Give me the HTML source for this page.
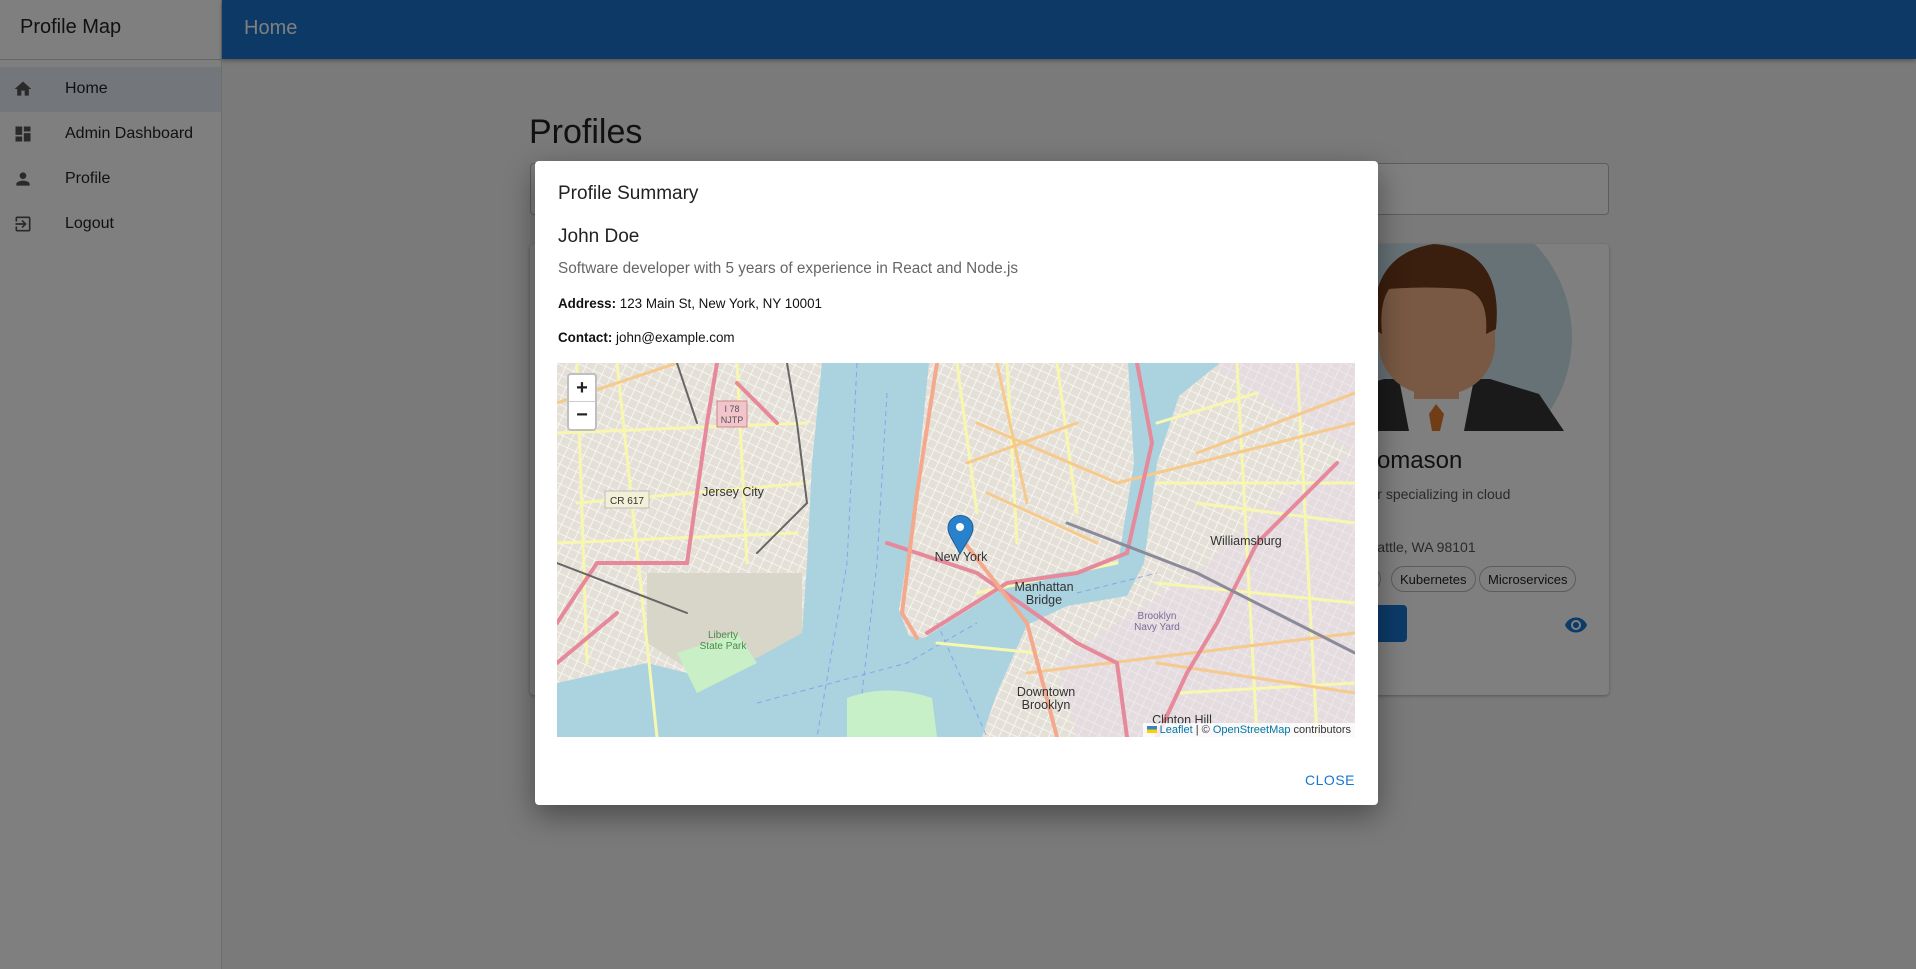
<!DOCTYPE html>
<html><head><meta charset="utf-8"><style>
*{box-sizing:border-box;margin:0;padding:0}
body{width:1916px;height:969px;overflow:hidden;background:#f5f5f5;font-family:"Liberation Sans",Arial,sans-serif;position:relative;color:#222}
.abs{position:absolute}
.side{left:0;top:0;width:222px;height:969px;background:#fff;border-right:1px solid #ddd}
.side .ttl{position:absolute;left:20px;top:16px;font-size:20px;color:#222}
.side .hr{position:absolute;left:0;top:59px;width:222px;border-top:1px solid #ccc}
.item{position:absolute;left:0;width:221px;height:45px;font-size:16px;color:#222}
.item span{position:absolute;left:65px;top:13px}
.item svg{position:absolute;left:13px;top:12px}
.hdr{left:222px;top:0;width:1694px;height:59px;background:#1872cc;box-shadow:0 2px 4px rgba(0,0,0,.3)}
.hdr span{position:absolute;left:22px;top:17px;color:#fff;font-size:20px}
.card{background:#fff;border-radius:4px;box-shadow:0 1px 3px rgba(0,0,0,.3)}
.chip{position:absolute;height:26px;border:1px solid #bbb;border-radius:13px;font-size:13px;padding:5px 8px;color:#222}
.overlay{left:0;top:0;width:1916px;height:969px;background:rgba(0,0,0,.5)}
.modal{left:535px;top:161px;width:843px;height:644px;background:#fff;border-radius:4px;box-shadow:0 10px 30px rgba(0,0,0,.4)}
.t{position:absolute;white-space:nowrap}
</style></head><body>
<div class="abs side">
 <div class="ttl">Profile Map</div><div class="hr"></div>
 <div class="item" style="top:67px;background:#e6eef6"><svg width="20" height="20" viewBox="0 0 24 24"><path d="M10 20v-6h4v6h5v-8h3L12 3 2 12h3v8z" fill="#555"/></svg><span>Home</span></div>
 <div class="item" style="top:112px"><svg width="20" height="20" viewBox="0 0 24 24"><path d="M3 13h8V3H3zm0 8h8v-6H3zm10 0h8V11h-8zm0-18v6h8V3z" fill="#555"/></svg><span>Admin Dashboard</span></div>
 <div class="item" style="top:157px"><svg width="20" height="20" viewBox="0 0 24 24"><path d="M12 12c2.2 0 4-1.8 4-4s-1.8-4-4-4-4 1.8-4 4 1.8 4 4 4zm0 2c-2.7 0-8 1.3-8 4v2h16v-2c0-2.7-5.3-4-8-4z" fill="#555"/></svg><span>Profile</span></div>
 <div class="item" style="top:202px"><svg width="20" height="20" viewBox="0 0 24 24"><path d="M10.1 15.6 11.5 17l5-5-5-5-1.4 1.4 2.6 2.6H3v2h9.7zM19 3H5c-1.1 0-2 .9-2 2v4h2V5h14v14H5v-4H3v4c0 1.1.9 2 2 2h14c1.1 0 2-.9 2-2V5c0-1.1-.9-2-2-2z" fill="#555"/></svg><span>Logout</span></div>
</div>
<div class="abs hdr"><span>Home</span></div>
<div class="t" style="left:529px;top:113px;font-size:34px;color:#222">Profiles</div>
<div class="abs" style="left:530px;top:163px;width:1079px;height:52px;border:1px solid #bbb;border-radius:4px;background:#fff"></div>
<div class="abs card" style="left:530px;top:244px;width:345px;height:451px"></div>
<div class="abs card" style="left:897px;top:244px;width:345px;height:451px"></div>
<div class="abs card" style="left:1264px;top:244px;width:345px;height:451px;overflow:hidden">
 <svg class="abs" style="left:0;top:0" width="345" height="187" viewBox="0 0 345 187">
  <circle cx="173" cy="93" r="135" fill="#cfe4ee"/>
  <path d="M40 187 L70 150 L120 135 L226 135 L275 150 L300 187Z" fill="#353535"/>
  <path d="M135 135 L210 135 L200 187 L145 187Z" fill="#fff"/>
  <path d="M165 170 L172 160 L180 170 L176 187 L168 187Z" fill="#e07b2c"/>
  <rect x="115" y="20" width="116" height="130" rx="50" fill="#f2b386"/>
  <rect x="150" y="120" width="45" height="35" fill="#f2b386"/>
  <path d="M110 85 Q105 10 170 0 Q240 5 232 85 L222 90 Q225 50 200 45 Q160 42 125 45 Q115 60 118 90Z" fill="#743d1c"/>
 </svg>
 <div class="t" style="left:16px;top:203px;font-size:24px">Ethan Thomason</div>
 <div class="t" style="left:16px;top:242px;font-size:14px;color:#555">Cloud developer specializing in cloud</div>
 <div class="t" style="left:16px;top:295px;font-size:14px;color:#555">456 Pine St, Seattle, WA 98101</div>
 <div class="chip" style="left:70px;top:322px">AWS</div>
 <div class="chip" style="left:127px;top:322px">Kubernetes</div>
 <div class="chip" style="left:215px;top:322px">Microservices</div>
 <div class="abs" style="left:16px;top:361px;width:127px;height:37px;background:#1976d2;border-radius:4px;color:#fff;font-size:14px;padding:11px 14px">VIEW PROFILE</div>
 <svg class="abs" style="left:300px;top:369px" width="24" height="24" viewBox="0 0 24 24"><path d="M12 4.5C7 4.5 2.7 7.6 1 12c1.7 4.4 6 7.5 11 7.5s9.3-3.1 11-7.5c-1.7-4.4-6-7.5-11-7.5zM12 17c-2.8 0-5-2.2-5-5s2.2-5 5-5 5 2.2 5 5-2.2 5-5 5zm0-8c-1.7 0-3 1.3-3 3s1.3 3 3 3 3-1.3 3-3-1.3-3-3-3z" fill="#1976d2"/></svg>
</div>
<div class="abs overlay"></div>
<div class="abs modal">
 <div class="t" style="left:23px;top:22px;font-size:19px;color:#222">Profile Summary</div>
 <div class="t" style="left:23px;top:65px;font-size:19px;color:#222">John Doe</div>
 <div class="t" style="left:23px;top:99px;font-size:15.3px;color:#666">Software developer with 5 years of experience in React and Node.js</div>
 <div class="t" style="left:23px;top:135px;font-size:13.4px;color:#111"><b>Address:</b> 123 Main St, New York, NY 10001</div>
 <div class="t" style="left:23px;top:169px;font-size:13.4px;color:#111"><b>Contact:</b> john@example.com</div>
 <div class="abs" style="left:22px;top:202px;width:798px;height:374px;overflow:hidden;background:#ece8e1">
  <svg width="798" height="374" viewBox="0 0 798 374" style="position:absolute;left:0;top:0">
   <defs>
    <pattern id="g" width="9" height="9" patternUnits="userSpaceOnUse" patternTransform="rotate(25)">
     <rect width="9" height="9" fill="#e4e0d8"/><path d="M0 0H9M0 0V9" stroke="#fbfaf7" stroke-width="1.6"/>
    </pattern>
   </defs>
   <rect width="798" height="374" fill="url(#g)"/>
   <path d="M650 0 L798 0 L798 374 L520 374 L500 300 L560 260 L640 210 L700 150 L760 110 L798 90 Z" fill="#e5d8e6" opacity=".45"/>
   <path d="M90 210 L245 210 L245 300 L130 305 L90 280Z" fill="#d8d5c9"/>
   <path d="M265 0 L372 0 L357 150 L342 247 L352 273 L367 275 L459 217 L561 200 L577 100 L571 0 L663 0 L622 33 L600 100 L587 200 L570 233 L510 243 L470 262 L440 330 L425 374 L0 374 L0 320 L90 300 L130 310 L200 295 L245 270 L250 200 L255 100Z" fill="#aad3df"/>
   <g stroke="#7a8ef0" stroke-width="1" stroke-dasharray="5 4" fill="none" opacity=".7">
    <path d="M300 0 L290 200 L260 374 M330 30 L320 200 L300 374 M200 340 L350 300 L420 260 M520 230 L600 210 M380 260 L430 374"/>
   </g>
   <path d="M290 335 Q330 320 375 335 L380 374 L290 374Z" fill="#c8f0c8"/>
   <path d="M120 290 L180 270 L200 300 L140 330Z" fill="#c8efc6"/>
   <g fill="none" stroke-linecap="round">
    <g stroke="#f7f7b0" stroke-width="3">
     <path d="M20 140 L250 120 M0 70 L250 60 M60 0 L100 374 M600 60 L700 30 M640 140 L798 160 M620 330 L798 320 M0 180 L240 170 M20 0 L30 300 M180 0 L190 200 M400 0 L420 150 M450 0 L460 180 M500 0 L520 150 M420 230 L560 200 M680 0 L700 374 M740 0 L760 374 M600 120 L798 120 M600 220 L798 240 M380 280 L480 290"/>
    </g>
    <g stroke="#f6c98c" stroke-width="3">
     <path d="M470 310 L798 270 M420 60 L560 120 L798 60 M410 100 L520 60 M430 130 L540 180 M0 40 L120 0 M640 90 L798 30 M600 300 L798 330 M440 0 L470 140"/>
    </g>
    <g stroke="#e6899b" stroke-width="4">
     <path d="M0 260 L40 200 L130 200 L150 60 L160 0 M330 180 L420 210 L520 280 L560 300 L570 374 M580 0 L595 80 L570 190 L520 210 L450 220 L370 270 M780 100 L700 180 L660 260 L630 310 L600 374 M180 20 L220 60 M0 300 L60 250"/>
    </g>
    <g stroke="#f4a98d" stroke-width="4">
     <path d="M380 0 L360 130 L345 250 L360 275 M400 170 L470 260 L500 374"/>
    </g>
    <path d="M510 160 L640 210 L798 290" stroke="#8a8a9a" stroke-width="3"/>
    <path d="M230 0 L240 60 L250 140 L200 190 M0 200 L130 250 M120 0 L140 60" stroke="#666" stroke-width="2"/>
   </g>
   <g font-family="Liberation Sans,sans-serif" font-size="12.5" fill="#333" text-anchor="middle">
    <text x="176" y="133">Jersey City</text>
    <text x="404" y="198">New York</text>
    <text x="689" y="182">Williamsburg</text>
    <text x="487" y="228">Manhattan</text><text x="487" y="241">Bridge</text>
    <text x="489" y="333">Downtown</text><text x="489" y="346">Brooklyn</text>
    <text x="625" y="361">Clinton Hill</text>
    <text x="166" y="275" fill="#4a8a4a" font-size="10">Liberty</text><text x="166" y="286" fill="#4a8a4a" font-size="10">State Park</text>
    <text x="600" y="256" fill="#7a6a9a" font-size="10">Brooklyn</text><text x="600" y="267" fill="#7a6a9a" font-size="10">Navy Yard</text>
   </g>
   <rect x="48" y="128" width="44" height="17" fill="#f2f1d8" stroke="#bbb"/><text x="70" y="141" font-size="10" text-anchor="middle" font-family="Liberation Sans,sans-serif" fill="#333">CR 617</text>
   <rect x="160" y="38" width="30" height="26" fill="#f2c4cc" stroke="#c88"/><text x="175" y="49" font-size="9" text-anchor="middle" fill="#555" font-family="Liberation Sans,sans-serif">I 78</text><text x="175" y="60" font-size="9" text-anchor="middle" fill="#555" font-family="Liberation Sans,sans-serif">NJTP</text>
   <path d="M403 191 C398 180 391 172 391 165 A12.5 12.5 0 0 1 416 165 C416 172 409 180 403 191Z" fill="#2a81cb" stroke="#1d5f99"/>
   <circle cx="403" cy="164" r="4" fill="#fff"/>
  </svg>
  <div class="abs" style="left:10px;top:10px;width:30px;height:58px;background:#fff;border:2px solid rgba(0,0,0,.25);border-radius:4px">
   <div style="height:27px;border-bottom:1px solid #ccc;text-align:center;font:bold 20px/26px 'Liberation Sans',sans-serif">+</div>
   <div style="text-align:center;font:bold 20px/26px 'Liberation Sans',sans-serif">−</div>
  </div>
  <div class="abs" style="right:0;bottom:0;background:rgba(255,255,255,.8);font-size:11px;padding:1px 4px;color:#333"><span style="display:inline-block;width:10px;height:7px;background:linear-gradient(#3b82c4 50%,#f5d300 50%)"></span> <span style="color:#0078a8">Leaflet</span> | © <span style="color:#0078a8">OpenStreetMap</span> contributors</div>
 </div>
 <div class="t" style="right:23px;top:611px;font-size:14px;color:#1976d2;letter-spacing:.5px">CLOSE</div>
</div>
</body></html>
